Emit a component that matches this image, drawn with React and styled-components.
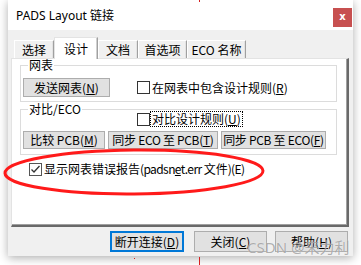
import React from "react";
import styled, { createGlobalStyle } from "styled-components";

const Global = createGlobalStyle`
  html, body { margin: 0; padding: 0; background: #ffffff; overflow: hidden; }
  body { font-family: "Noto Sans CJK SC", sans-serif; }
`;

const FONT = `"Noto Sans CJK SC", "Noto Sans", sans-serif`;

const Stage = styled.div`
  position: relative;
  width: 361px;
  height: 265px;
  overflow: hidden;
`;

const Dialog = styled.div`
  margin-left: 8px;
  width: 345px;
  height: 256px;
  background: #f0f0f0;
  box-shadow: 0 2px 9px rgba(0, 0, 0, 0.32);
  display: flex;
  flex-direction: column;
  font-family: ${FONT};
  font-size: 12px;
  color: #000;
`;

const TitleBar = styled.div`
  height: 31px;
  background: #ffffff;
  display: flex;
  align-items: flex-start;
  padding-left: 8px;
`;

const Title = styled.div`
  font-family: "Noto Sans", "Noto Sans CJK SC", sans-serif;
  font-size: 12px;
  line-height: 16px;
  margin-top: 8px;
  color: #000;
`;

const CloseBtn = styled.div`
  margin-left: auto;
  margin-right: 1px;
  margin-top: 8px;
  width: 19px;
  height: 19px;
  background: #c75050;
  color: #fff;
  font-family: "DejaVu Sans", sans-serif;
  font-weight: bold;
  font-size: 10px;
  line-height: 18px;
  text-align: center;
`;

const Body = styled.div`
  flex: 1;
  padding: 7px 4px 4px 3px;
  display: flex;
  flex-direction: column;
`;

const TabStrip = styled.div`
  display: flex;
  align-items: flex-end;
  height: 21px;
  padding-left: 3px;
  position: relative;
  z-index: 1;
`;

const Tab = styled.div`
  width: ${(p) => p.$w}px;
  height: ${(p) => (p.$active ? 22 : 18)}px;
  box-sizing: border-box;
  background: ${(p) => (p.$active ? "#ffffff" : "#f0f0f0")};
  border-top: 1px solid ${(p) => (p.$active ? "#e3e3e3" : "#ffffff")};
  border-left: 1px solid ${(p) => (p.$active ? "#e3e3e3" : "#ffffff")};
  border-right: 1px solid #a0a0a0;
  box-shadow: inset -1px 0 0 ${(p) => (p.$active ? "#d0d0d0" : "#e3e3e3")};
  margin-bottom: ${(p) => (p.$active ? -1 : 0)}px;
  display: flex;
  justify-content: center;
  align-items: flex-start;
  padding-top: ${(p) => (p.$active ? 3 : 1)}px;
  line-height: 16px;
  font-size: 12px;
  white-space: nowrap;
`;

const Panel = styled.div`
  height: 169px;
  box-sizing: border-box;
  background: #ffffff;
  border-top: 1px solid #e3e3e3;
  border-left: 1px solid #e3e3e3;
  border-right: 2px solid #696969;
  border-bottom: 2px solid #696969;
  box-shadow: inset -1px -1px 0 #a0a0a0;
  padding: 0 10px 0 8px;
  display: flex;
  flex-direction: column;
`;

const Group = styled.fieldset`
  margin: ${(p) => p.$mt}px 0 0 0;
  padding: 0 2px ${(p) => p.$pb}px 2px;
  border: 1px solid #dcdcdc;
  min-width: 0;
  display: flex;
  flex-direction: column;
`;

const Legend = styled.legend`
  margin-left: 5px;
  padding: 0 1px;
  font-size: 12px;
  line-height: 12px;
  height: 12px;
`;

const Row = styled.div`
  display: flex;
  align-items: center;
  gap: ${(p) => p.$gap || 0}px;
  margin-top: ${(p) => p.$mt || 0}px;
`;

const Button = styled.div`
  width: ${(p) => p.$w}px;
  height: ${(p) => p.$h || 19}px;
  box-sizing: border-box;
  background: #e1e1e1;
  border: 1px solid #adadad;
  display: flex;
  align-items: center;
  justify-content: center;
  font-size: 12px;
  line-height: 14px;
  white-space: nowrap;
  letter-spacing: ${(p) => p.$ls || 0}px;
  margin-left: ${(p) => p.$ml || 0}px;
`;

const FooterButton = styled(Button)`
  height: 21px;
  border: ${(p) => (p.$focus ? "2px solid #0078d7" : "1px solid #adadad")};
`;

const Footer = styled.div`
  display: flex;
  justify-content: flex-end;
  margin-top: 4px;
  padding-right: 1px;
`;

const CheckLine = styled.div`
  display: flex;
  align-items: center;
  margin-left: ${(p) => p.$ml || 0}px;
  margin-top: ${(p) => p.$mt || 0}px;
  height: 16px;
`;

const Box = styled.span`
  width: 13px;
  height: 13px;
  box-sizing: border-box;
  border: 1px solid ${(p) => (p.$checked ? "#555" : "#333")};
  background: #fff;
  display: inline-flex;
  align-items: center;
  justify-content: center;
  flex: none;
`;

const Label = styled.span`
  margin-left: 1px;
  padding: 0 1px;
  line-height: 14px;
  font-size: 12px;
  white-space: nowrap;
  letter-spacing: ${(p) => p.$ls || 0}px;
  outline: ${(p) => (p.$focus ? "1px dotted #000" : "none")};
  outline-offset: 0px;
`;

const Narrow = styled.span`
  letter-spacing: -0.6px;
`;

const Ellipse = styled.svg`
  position: absolute;
  left: 0;
  top: 0;
  pointer-events: none;
`;

const Mark = styled.div`
  position: absolute;
  left: ${(p) => p.$x}px;
  top: ${(p) => p.$y}px;
  width: 1px;
  height: ${(p) => p.$h}px;
  background: #d42020;
`;

const Watermark = styled.div`
  position: absolute;
  left: 247px;
  top: 238px;
  font-family: "Noto Sans", "Noto Sans CJK SC", sans-serif;
  font-size: 15px;
  line-height: 18px;
  color: rgba(110, 110, 110, 0.55);
  text-shadow: 0 0 1px rgba(255, 255, 255, 0.8);
  white-space: nowrap;
`;

const Check = ({ checked }) => (
  <Box $checked={checked}>
    {checked && (
      <svg width="11" height="11" viewBox="0 0 11 11">
        <polyline points="1.5,5.5 4,8 9.5,2" fill="none" stroke="#333" strokeWidth="1.3" />
      </svg>
    )}
  </Box>
);

export default function App() {
  return (
    <Stage>
      <Global />
      <Dialog>
        <TitleBar>
          <Title>PADS Layout 链接</Title>
          <CloseBtn>x</CloseBtn>
        </TitleBar>
        <Body>
          <TabStrip>
            <Tab $w={40}>选择</Tab>
            <Tab $w={44} $active>设计</Tab>
            <Tab $w={40}>文档</Tab>
            <Tab $w={49}>首选项</Tab>
            <Tab $w={59}>ECO 名称</Tab>
          </TabStrip>
          <Panel>
            <Group $mt={0} $pb={4}>
              <Legend>网表</Legend>
              <Row $mt={7}>
                <Button $w={87}>发送网表(<u>N</u>)</Button>
                <CheckLine $ml={27}>
                  <Check />
                  <Label>在网表中包含设计规则(<u>R</u>)</Label>
                </CheckLine>
              </Row>
            </Group>
            <Group $mt={1} $pb={5}>
              <Legend>对比/ECO</Legend>
              <CheckLine $ml={114} $mt={-4}>
                <Check />
                <Label $focus>对比设计规则(<u>U</u>)</Label>
              </CheckLine>
              <Row $mt={4} $gap={3}>
                <Button $w={82} $h={18}>比较 PCB(<u>M</u>)</Button>
                <Button $w={110} $h={18} $ls={-0.3}>同步 ECO 至 PCB(<u>T</u>)</Button>
                <Button $w={105} $h={18} $ls={-0.3}>同步 PCB 至 ECO(<u>F</u>)</Button>
              </Row>
            </Group>
            <CheckLine $ml={9} $mt={6}>
              <Check checked />
              <Label>
                显示网表错误报告<Narrow>(padsn<u>e</u>t.err </Narrow>文件<Narrow>)(E)</Narrow>
              </Label>
            </CheckLine>
          </Panel>
          <Footer>
            <FooterButton $w={74} $focus>断开连接(<u>D</u>)</FooterButton>
            <FooterButton $w={73} $ml={10}>关闭(<u>C</u>)</FooterButton>
            <FooterButton $w={73} $ml={8}>帮助(<u>H</u>)</FooterButton>
          </Footer>
        </Body>
      </Dialog>
      <Ellipse width="361" height="265" viewBox="0 0 361 265">
        <ellipse cx="134" cy="172" rx="129" ry="22" fill="none" stroke="#ff1a1a" strokeWidth="3" transform="rotate(-0.5 134 172)" />
      </Ellipse>
      <Mark $x={199} $y={0} $h={2} />
      <Mark $x={199} $y={257} $h={8} />
      <Mark $x={134} $y={258} $h={1} />
      <Watermark>CSDN @来力利</Watermark>
    </Stage>
  );
}
